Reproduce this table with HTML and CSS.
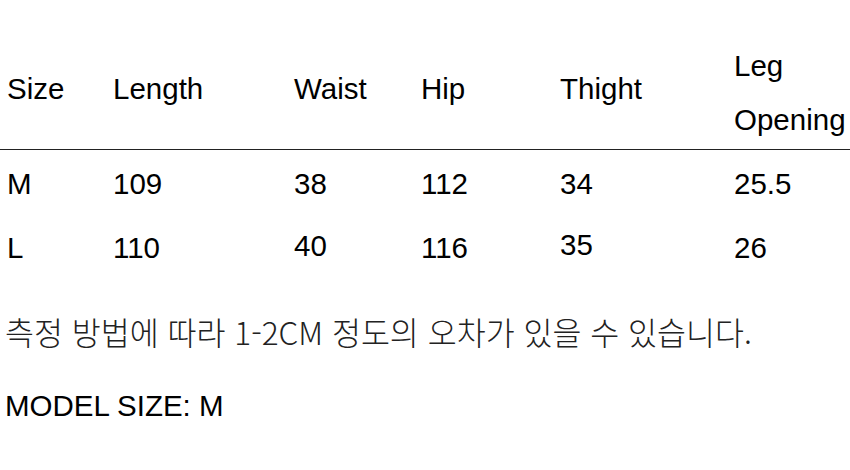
FILE: index.html
```html
<!DOCTYPE html>
<html lang="ko">
<head>
<meta charset="utf-8">
<title>Size</title>
<link rel="stylesheet" href="styles.css">
</head>
<body>
<div class="page">
  <div class="size-table">
    <div class="row head">
      <div class="cell lift">Size</div>
      <div class="cell lift">Length</div>
      <div class="cell lift">Waist</div>
      <div class="cell lift">Hip</div>
      <div class="cell lift">Thight</div>
      <div class="cell two">Leg<br>Opening</div>
    </div>
    <div class="body">
      <div class="row">
        <div class="cell">M</div>
        <div class="cell">109</div>
        <div class="cell">38</div>
        <div class="cell">112</div>
        <div class="cell">34</div>
        <div class="cell">25.5</div>
      </div>
      <div class="row">
        <div class="cell">L</div>
        <div class="cell">110</div>
        <div class="cell"><span class="up2">40</span></div>
        <div class="cell">116</div>
        <div class="cell"><span class="up3">35</span></div>
        <div class="cell">26</div>
      </div>
    </div>
  </div>
  <p class="note">측정 방법에 따라 1-2CM 정도의 오차가 있을 수 있습니다.</p>
  <p class="model">MODEL SIZE: M</p>
</div>
</body>
</html>
```

FILE: styles.css
```css
html, body {
  margin: 0;
  padding: 0;
  background: #fff;
}

.page {
  width: 850px;
  padding-top: 39px;
  font-family: "Liberation Sans", Arial, sans-serif;
  font-size: 29.5px;
  color: #000;
}

.row {
  display: grid;
  grid-template-columns: 106px 181px 127px 139px 174px 1fr;
  align-items: center;
}

.head {
  padding-bottom: 2px;
  border-bottom: 1px solid #222;
}

.cell {
  padding-left: 7px;
  line-height: 54px;
  white-space: nowrap;
}

.lift {
  padding-bottom: 8px;
}

.body {
  padding-top: 2px;
}

.body .cell {
  line-height: 64px;
}

.up2,
.up3 {
  display: inline-block;
  line-height: 1;
}

.up2 {
  vertical-align: 2px;
}

.up3 {
  vertical-align: 3px;
}

.note {
  margin: 31px 0 0;
  padding-left: 5px;
  font-family: "Noto Sans CJK KR", "Noto Sans", sans-serif;
  font-size: 31.5px;
  font-weight: 300;
  line-height: 40px;
  color: #222;
}

.model {
  margin: 35px 0 0;
  padding-left: 5px;
  line-height: 40px;
}
```
